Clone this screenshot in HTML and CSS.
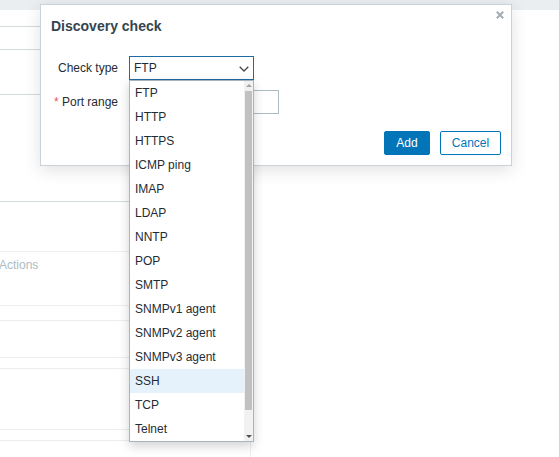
FILE: index.html
```html
<!DOCTYPE html>
<html>
<head>
<meta charset="utf-8">
<link rel="stylesheet" href="styles.css">
</head>
<body>
<div class="topbar"></div>
<div class="bg">
  <div class="row dark h16"></div>
  <div class="row dark h22"></div>
  <div class="row dark h44"></div>
  <div class="row dark h106"></div>
  <div class="lower">
    <div class="row light h49"></div>
    <div class="row light h53"><span class="muted">Actions</span></div>
    <div class="row light h14"></div>
    <div class="row light h36"></div>
    <div class="row light h10"></div>
    <div class="row light h60"></div>
    <div class="row light h10"></div>
    <div class="row rest"></div>
  </div>
</div>

<div class="dialog">
  <div class="dlg-head">Discovery check</div>
  <button class="close" aria-label="Close">
    <svg width="8" height="8" viewBox="0 0 8 8"><path d="M0.8 0.8L7.2 7.2M7.2 0.8L0.8 7.2" stroke="#a3adb3" stroke-width="2" fill="none"/></svg>
  </button>
  <div class="form">
    <label class="lbl">Check type</label>
    <div class="select-wrap">
      <div class="select">
        <span>FTP</span>
        <svg class="chev" width="10" height="6" viewBox="0 0 10 6"><path d="M0.7 0.7L5 5L9.3 0.7" stroke="#4a4a4a" stroke-width="1.3" fill="none"/></svg>
      </div>
      <div class="dropdown">
        <ul class="options">
          <li>FTP</li>
          <li>HTTP</li>
          <li>HTTPS</li>
          <li>ICMP ping</li>
          <li>IMAP</li>
          <li>LDAP</li>
          <li>NNTP</li>
          <li>POP</li>
          <li>SMTP</li>
          <li>SNMPv1 agent</li>
          <li>SNMPv2 agent</li>
          <li>SNMPv3 agent</li>
          <li class="hover">SSH</li>
          <li>TCP</li>
          <li>Telnet</li>
        </ul>
        <div class="scrollbar">
          <div class="sb-btn"><span class="arr-up"></span></div>
          <div class="thumb"></div>
          <div class="sb-fill"></div>
          <div class="sb-btn"><span class="arr-down"></span></div>
        </div>
      </div>
    </div>
    <label class="lbl"><span class="req">*</span> Port range</label>
    <div><div class="input"></div></div>
  </div>
  <div class="footer">
    <button class="btn primary">Add</button>
    <button class="btn secondary">Cancel</button>
  </div>
</div>
</body>
</html>
```

FILE: styles.css
```css
* { box-sizing: border-box; }
html, body { margin: 0; padding: 0; }
body {
  width: 559px;
  height: 457px;
  overflow: hidden;
  background: #ffffff;
  font-family: "Liberation Sans", Arial, sans-serif;
  font-size: 12px;
  color: #1f2c33;
  position: relative;
}
.topbar { height: 10px; background: #ebeef0; }
.bg { width: 251px; }
.row { border-bottom: 1px solid #ebeef0; }
.row.dark { border-bottom-color: #d3dbdf; }
.lower { border-right: 1px solid #ebeef0; }
.row.rest { border-bottom: none; height: 16px; }
.h10 { height: 11px; }
.h14 { height: 15px; }
.h16 { height: 17px; }
.h22 { height: 23px; }
.h36 { height: 37px; }
.h44 { height: 45px; }
.h49 { height: 50px; }
.h53 { height: 54px; }
.h60 { height: 61px; }
.h106 { height: 107px; }
.muted {
  display: block;
  color: #acbbc2;
  line-height: 14px;
  padding-top: 6px;
  margin-left: -1px;
}

.dialog {
  position: absolute;
  left: 40px;
  top: 4px;
  width: 472px;
  height: 162px;
  background: #ffffff;
  border: 1px solid #c9d2d7;
  box-shadow: 0 4px 16px rgba(0, 0, 0, 0.12);
}
.dlg-head {
  padding: 13px 10px 0 10px;
  font-size: 14px;
  line-height: 16px;
  font-weight: bold;
  color: #34454f;
}
.close {
  position: absolute;
  top: 6px;
  right: 7px;
  width: 8px;
  height: 8px;
  padding: 0;
  border: none;
  background: none;
  display: block;
}
.close svg { display: block; }
.form {
  margin-top: 22px;
  display: grid;
  grid-template-columns: 77px auto;
  column-gap: 11px;
  row-gap: 10px;
  align-items: center;
}
.lbl {
  text-align: right;
  line-height: 24px;
  white-space: nowrap;
}
.req { color: #e45959; }
.select-wrap { position: relative; width: 125px; }
.select {
  height: 24px;
  border: 1px solid #1f6ba3;
  padding-left: 4px;
  padding-right: 4px;
  display: flex;
  align-items: center;
  justify-content: space-between;
}
.chev { display: block; margin-top: 1px; }
.input {
  width: 150px;
  height: 24px;
  border: 1px solid #acbbc2;
}
.dropdown {
  position: absolute;
  left: 0;
  top: 24px;
  width: 125px;
  height: 362px;
  background: #ffffff;
  border: 1px solid #aab4ba;
  box-shadow: 0 4px 10px rgba(0, 0, 0, 0.18);
  display: flex;
  z-index: 5;
}
.options {
  list-style: none;
  margin: 0;
  padding: 0;
  flex: 1;
}
.options li {
  height: 24px;
  line-height: 24px;
  padding-left: 5px;
  white-space: nowrap;
}
.options li.hover { background: #e6f2fb; }
.scrollbar {
  width: 9px;
  background: #f1f1f1;
  display: flex;
  flex-direction: column;
  align-items: center;
}
.sb-btn {
  height: 9px;
  width: 9px;
  display: flex;
  align-items: center;
  justify-content: center;
}
.arr-up {
  width: 0; height: 0;
  border-left: 3px solid transparent;
  border-right: 3px solid transparent;
  border-bottom: 3px solid #a3a3a3;
}
.arr-down {
  width: 0; height: 0;
  border-left: 3px solid transparent;
  border-right: 3px solid transparent;
  border-top: 3px solid #505050;
}
.thumb {
  width: 7px;
  height: 319px;
  margin-top: 1px;
  background: #c1c1c1;
}
.sb-fill { flex: 1; }
.footer {
  margin-top: 17px;
  padding-right: 10px;
  display: flex;
  justify-content: flex-end;
  gap: 10px;
}
.btn {
  height: 24px;
  font-family: "Liberation Sans", Arial, sans-serif;
  font-size: 12px;
  border-radius: 2px;
  padding: 0;
  cursor: pointer;
}
.btn.primary {
  width: 46px;
  background: #0275b8;
  border: 1px solid #0275b8;
  color: #ffffff;
}
.btn.secondary {
  width: 61px;
  background: #ffffff;
  border: 1px solid #0275b8;
  color: #0275b8;
}
```
